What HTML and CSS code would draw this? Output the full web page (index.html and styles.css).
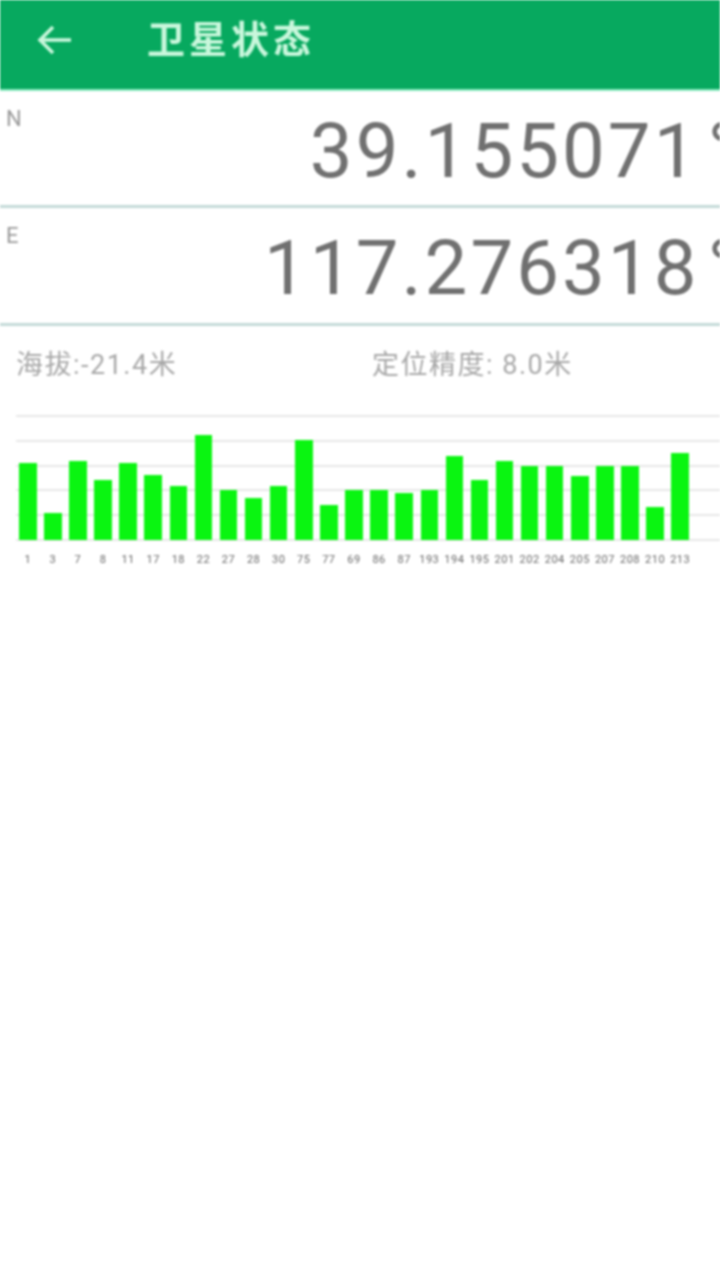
FILE: index.html
```html
<!DOCTYPE html>
<html lang="zh-CN">
<head>
<meta charset="utf-8"/>
<meta content="width=device-width, initial-scale=1.0" name="viewport"/>
<title>卫星状态</title>
<link rel="stylesheet" href="styles.css">
</head>
<body>
<div class="page">
  <header class="toolbar">
    <svg class="back" width="34" height="30" viewBox="0 0 34 30" fill="none" stroke="currentColor" stroke-width="3.6">
      <path d="M34 15H3"/>
      <path d="M16 2L3 15l13 13"/>
    </svg>
    <h1 class="title">卫星状态</h1>
  </header>

  <section class="coord coord-n">
    <span class="coord-label">N</span>
    <span class="coord-value">39.155071<span class="deg">°</span></span>
  </section>
  <section class="coord coord-e">
    <span class="coord-label">E</span>
    <span class="coord-value">117.276318<span class="deg">°</span></span>
  </section>

  <div class="info">
    <span>海拔:-21.4米</span>
    <span>定位精度: 8.0米</span>
  </div>

  <div class="chart">
    <div class="plot">
      <div class="bar" style="height:77px"></div>
      <div class="bar" style="height:27px"></div>
      <div class="bar" style="height:79px"></div>
      <div class="bar" style="height:60px"></div>
      <div class="bar" style="height:77px"></div>
      <div class="bar" style="height:65px"></div>
      <div class="bar" style="height:54px"></div>
      <div class="bar" style="height:105px"></div>
      <div class="bar" style="height:50px"></div>
      <div class="bar" style="height:42px"></div>
      <div class="bar" style="height:54px"></div>
      <div class="bar" style="height:100px"></div>
      <div class="bar" style="height:35px"></div>
      <div class="bar" style="height:50px"></div>
      <div class="bar" style="height:50px"></div>
      <div class="bar" style="height:47px"></div>
      <div class="bar" style="height:50px"></div>
      <div class="bar" style="height:84px"></div>
      <div class="bar" style="height:60px"></div>
      <div class="bar" style="height:79px"></div>
      <div class="bar" style="height:74px"></div>
      <div class="bar" style="height:74px"></div>
      <div class="bar" style="height:64px"></div>
      <div class="bar" style="height:74px"></div>
      <div class="bar" style="height:74px"></div>
      <div class="bar" style="height:33px"></div>
      <div class="bar" style="height:87px"></div>
    </div>
    <div class="labels">
      <span>1</span><span>3</span><span>7</span><span>8</span><span>11</span><span>17</span><span>18</span><span>22</span><span>27</span>
      <span>28</span><span>30</span><span>75</span><span>77</span><span>69</span><span>86</span><span>87</span><span>193</span><span>194</span>
      <span>195</span><span>201</span><span>202</span><span>204</span><span>205</span><span>207</span><span>208</span><span>210</span><span>213</span>
    </div>
  </div>
</div>
</body>
</html>
```

FILE: styles.css
```css
html, body {
    margin: 0;
    padding: 0;
    background-color: #ffffff;
}

.page {
    width: 720px;
    height: 1280px;
    overflow: hidden;
    font-family: Roboto, "Noto Sans CJK SC", sans-serif;
    filter: blur(0.8px);
}

.toolbar {
    display: flex;
    align-items: center;
    gap: 76px;
    height: 91px;
    padding: 0 0 10px 37px;
    box-sizing: border-box;
    background-color: #07a95f;
    border-bottom: 2px solid #8beac0;
    color: #c9f7dc;
}

.back {
    flex-shrink: 0;
}

.title {
    margin: 0;
    font-size: 38px;
    font-weight: 700;
    letter-spacing: 4px;
    line-height: 50px;
}

.coord {
    display: flex;
    justify-content: space-between;
    box-sizing: border-box;
    height: 118px;
    padding: 15px 0 0 6px;
    border-bottom: 3px solid #c4dad8;
}

.coord-n {
    height: 117px;
}

.coord-label {
    font-size: 22px;
    line-height: 26px;
    color: #999999;
}

.coord-value {
    flex-shrink: 0;
    margin: 5px -19px 0 0;
    font-size: 76px;
    line-height: 80px;
    letter-spacing: 3.1px;
    color: #707070;
}

.deg {
    margin-left: 8px;
}

.info {
    display: grid;
    grid-template-columns: 356px 1fr;
    padding: 23px 0 0 16px;
    font-size: 27px;
    line-height: 32px;
    letter-spacing: 1.5px;
    color: #a8a8a8;
}

.chart {
    margin: 34px 0 0 16px;
}

.plot {
    display: grid;
    grid-template-columns: repeat(27, 25.1px);
    align-items: end;
    height: 126px;
    padding-left: 3px;
    background-image: repeating-linear-gradient(to bottom, #e8e8e8 0, #e8e8e8 2px, transparent 2px, transparent 24.8px);
}

.bar {
    width: 17.5px;
    margin-bottom: 1px;
    background-color: #0af511;
}

.labels {
    display: grid;
    grid-template-columns: repeat(27, 25.1px);
    padding: 12px 0 0 3px;
    filter: blur(0.5px);
}

.labels span {
    display: flex;
    justify-content: center;
    width: 17.5px;
    font-size: 11px;
    line-height: 14px;
    letter-spacing: 0.5px;
    white-space: nowrap;
    color: #666666;
}
```
